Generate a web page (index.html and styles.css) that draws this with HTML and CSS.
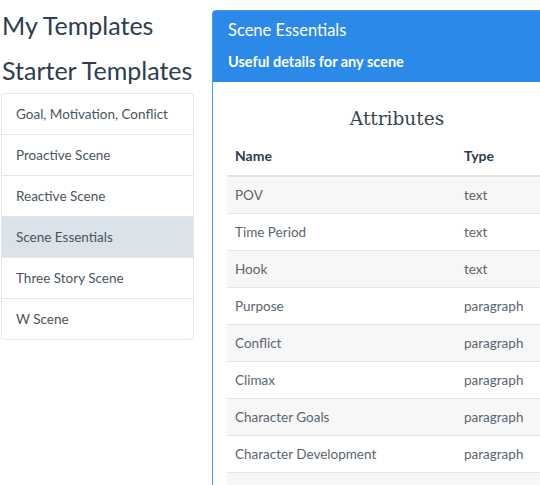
FILE: index.html
```html
<!DOCTYPE html>
<html>
<head>
<meta charset="utf-8">
<link rel="stylesheet" href="styles.css">
</head>
<body>
<div class="page">
  <aside class="sidebar">
    <h2 class="side-title">My Templates</h2>
    <h2 class="side-title second">Starter Templates</h2>
    <ul class="list">
      <li class="item">Goal, Motivation, Conflict</li>
      <li class="item">Proactive Scene</li>
      <li class="item">Reactive Scene</li>
      <li class="item active">Scene Essentials</li>
      <li class="item">Three Story Scene</li>
      <li class="item">W Scene</li>
    </ul>
  </aside>
  <section class="card">
    <header class="card-head">
      <div class="card-title">Scene Essentials</div>
      <div class="card-sub">Useful details for any scene</div>
    </header>
    <div class="card-body">
      <h3 class="attr-title">Attributes</h3>
      <table class="table">
        <thead>
          <tr><th class="c-name">Name</th><th>Type</th></tr>
        </thead>
        <tbody>
          <tr><td>POV</td><td>text</td></tr>
          <tr><td>Time Period</td><td>text</td></tr>
          <tr><td>Hook</td><td>text</td></tr>
          <tr><td>Purpose</td><td>paragraph</td></tr>
          <tr><td>Conflict</td><td>paragraph</td></tr>
          <tr><td>Climax</td><td>paragraph</td></tr>
          <tr><td>Character Goals</td><td>paragraph</td></tr>
          <tr><td>Character Development</td><td>paragraph</td></tr>
          <tr><td>&nbsp;</td><td>&nbsp;</td></tr>
        </tbody>
      </table>
    </div>
  </section>
</div>
</body>
</html>
```
FILE: styles.css
```css
html, body {
  margin: 0;
  padding: 0;
  background: #fff;
  overflow: hidden;
  height: 485px;
}
body {
  font-family: Lato, "Liberation Sans", sans-serif;
  color: #2c3e50;
}
.page {
  display: flex;
  align-items: flex-start;
  gap: 18px;
  padding-left: 1px;
  width: 700px;
  height: 485px;
  overflow: hidden;
}
.sidebar {
  width: 193px;
  flex: none;
}
.side-title {
  margin: 0;
  font-weight: 400;
  font-size: 25px;
  line-height: 30px;
  padding-left: 1px;
  margin-top: 10px;
  color: #2c3e50;
}
.side-title.second {
  margin-top: 15px;
}
.list {
  list-style: none;
  margin: 8px 0 0;
  padding: 0;
  border: 1px solid #e6e6e6;
  border-radius: 4px;
  overflow: hidden;
}
.item {
  height: 40px;
  line-height: 40px;
  padding-left: 14px;
  font-size: 13.5px;
  color: #4a5560;
  border-top: 1px solid #e6e6e6;
}
.item:first-child {
  border-top: none;
}
.item.active {
  background: #dae2ea;
}
.card {
  width: 360px;
  flex: none;
  margin-top: 10px;
  border: 1px solid #4a9ae8;
  border-radius: 4px 4px 0 0;
  height: 600px;
}
.card-head {
  background: #2b89e8;
  color: #fff;
  padding: 8px 15px 0;
  height: 63px;
}
.card-title {
  font-size: 16.5px;
  line-height: 22px;
}
.card-sub {
  margin-top: 11px;
  font-size: 14.5px;
  font-weight: 700;
  line-height: 20px;
}
.card-body {
  padding: 0 14px;
}
.attr-title {
  margin: 25px 0 6px;
  font-family: "DejaVu Serif", "Liberation Serif", serif;
  font-weight: 400;
  font-size: 18.5px;
  line-height: 24px;
  text-align: center;
  width: 340px;
  color: #3a4450;
}
.table {
  border-collapse: collapse;
  width: 330px;
  font-size: 13.5px;
}
.table th {
  text-align: left;
  font-weight: 700;
  font-size: 14px;
  padding: 9px 8px;
  line-height: 20px;
  border-bottom: 2px solid #e3e3e3;
  color: #2c3e50;
}
.table td {
  padding: 8px 8px;
  line-height: 20px;
  border-top: 1px solid #e6e6e6;
  color: #5a6570;
}
.table tbody tr:first-child td {
  border-top: none;
}
.table tbody tr:nth-child(odd) {
  background: #f7f7f7;
}
.c-name {
  width: 213px;
}
```
